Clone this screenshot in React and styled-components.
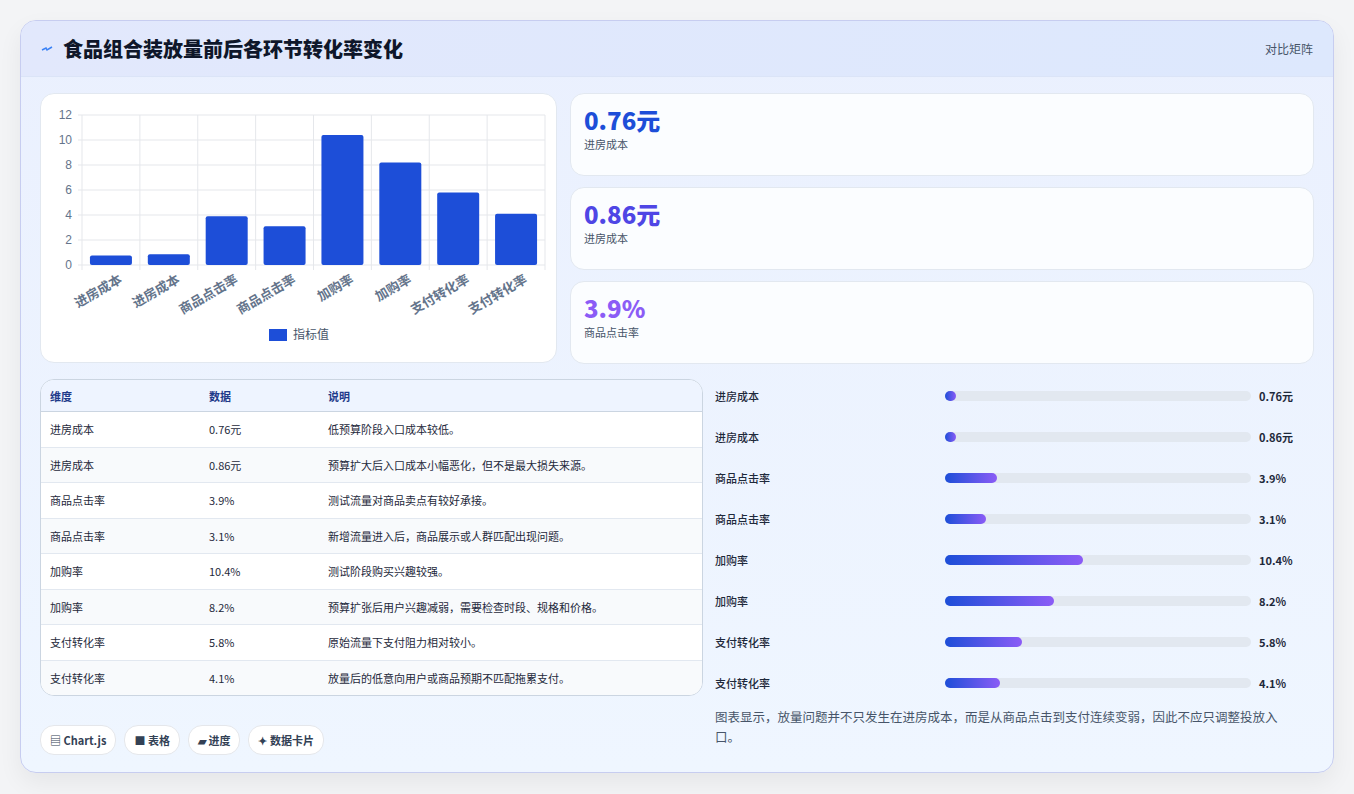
import React from "react";
import styled, { createGlobalStyle } from "styled-components";

const Global = createGlobalStyle`
  body { margin: 0; background: #f3f4f6; font-family: "Noto Sans CJK SC", "Noto Sans", sans-serif; }
`;

const data = [
  { name: "进房成本", value: 0.76, label: "0.76元", note: "低预算阶段入口成本较低。" },
  { name: "进房成本", value: 0.86, label: "0.86元", note: "预算扩大后入口成本小幅恶化，但不是最大损失来源。" },
  { name: "商品点击率", value: 3.9, label: "3.9%", note: "测试流量对商品卖点有较好承接。" },
  { name: "商品点击率", value: 3.1, label: "3.1%", note: "新增流量进入后，商品展示或人群匹配出现问题。" },
  { name: "加购率", value: 10.4, label: "10.4%", note: "测试阶段购买兴趣较强。" },
  { name: "加购率", value: 8.2, label: "8.2%", note: "预算扩张后用户兴趣减弱，需要检查时段、规格和价格。" },
  { name: "支付转化率", value: 5.8, label: "5.8%", note: "原始流量下支付阻力相对较小。" },
  { name: "支付转化率", value: 4.1, label: "4.1%", note: "放量后的低意向用户或商品预期不匹配拖累支付。" },
];

const Page = styled.div`
  padding: 20px;
  height: 794px;
  box-sizing: border-box;
`;
const Shell = styled.div`
  border: 1px solid #c7cdf0;
  border-radius: 16px;
  background: linear-gradient(180deg, #eaf0fe 0%, #eff6ff 100%);
  box-shadow: 0 10px 24px rgba(0,0,0,0.06);
  overflow: hidden;
  height: 753px;
  box-sizing: border-box;
`;
const Header = styled.div`
  height: 55px;
  display: flex;
  align-items: center;
  padding: 0 20px;
  background: linear-gradient(90deg, #e2e8fc, #dde8fd);
  border-bottom: 1px solid #dbe4f7;
`;
const Title = styled.h1`
  margin: 0;
  font-size: 20px;
  font-weight: 800;
  color: #0f172a;
  display: flex;
  align-items: center;
  gap: 10px;
`;
const Tag = styled.span`
  margin-left: auto;
  font-size: 12px;
  color: #475569;
`;
const Body = styled.div`
  padding: 16px 19px 0;
  display: grid;
  grid-template-columns: 663px 1fr;
  column-gap: 12px;
`;
const TopRow = styled.div`
  grid-column: 1 / 3;
  display: grid;
  grid-template-columns: 517px 1fr;
  gap: 13px;
  margin-bottom: 15px;
`;
const Card = styled.div`
  background: #fff;
  border: 1px solid #e2e8f0;
  border-radius: 14px;
`;
const ChartCard = styled(Card)`
  height: 270px;
  box-sizing: border-box;
`;
const Stats = styled.div`
  display: flex;
  flex-direction: column;
  gap: 11px;
`;
const Stat = styled(Card)`
  height: 83px;
  box-sizing: border-box;
  padding: 10px 13px;
  background: #fbfdff;
`;
const StatValue = styled.div`
  font-size: 24px;
  font-weight: 800;
  color: ${p => p.color};
  line-height: 32px;
`;
const StatLabel = styled.div`
  font-size: 11px;
  color: #475569;
`;
const Table = styled.table`
  width: 100%;
  border-collapse: collapse;
  font-size: 11px;
  color: #1e293b;
`;
const TableWrap = styled(Card)`
  overflow: hidden;
  border-color: #cbd5e1;
`;
const Th = styled.th`
  text-align: left;
  font-weight: 700;
  color: #1e3a8a;
  background: #eef4ff;
  height: 31px;
  padding: 0 9px;
  border-bottom: 1px solid #cbd5e1;
  width: ${p => p.w || "auto"};
`;
const Td = styled.td`
  height: 34.5px;
  padding: 0 9px;
  border-bottom: 1px solid #e2e8f0;
`;
const Tr = styled.tr`
  background: ${p => (p.odd ? "#f8fafc" : "#fff")};
  &:last-child td { border-bottom: none; }
`;
const Bars = styled.div`
  display: flex;
  flex-direction: column;
  margin-top: -4px;
`;
const BarRow = styled.div`
  display: grid;
  grid-template-columns: 222px 306px 1fr;
  align-items: center;
  column-gap: 8px;
  height: 41px;
  font-size: 11px;
  font-weight: 500;
  color: #1e293b;
`;
const Track = styled.div`
  height: 10px;
  border-radius: 5px;
  background: #e2e8f0;
`;
const Fill = styled.div`
  height: 100%;
  min-width: 11px;
  border-radius: 5px;
  background: linear-gradient(90deg, #1d4ed8, #8b5cf6);
`;
const BarValue = styled.span`
  font-weight: 700;
`;
const Chips = styled.div`
  display: flex;
  gap: 8px;
  margin-top: 29px;
`;
const Chip = styled.span`
  height: 28px;
  padding: 0 9px;
  border-radius: 14px;
  background: #fff;
  border: 1px solid #e5e7eb;
  display: flex;
  align-items: center;
  gap: 4px;
  font-size: 11px;
  font-weight: 700;
  color: #334155;
`;
const Note = styled.p`
  margin: 4px 20px 0 0;
  font-size: 12.5px;
  line-height: 20px;
  color: #475569;
`;

function BarChart() {
  const x0 = 41, x1 = 504, y0 = 21, y1 = 171;
  const slot = (x1 - x0) / 8;
  const ys = v => y1 - (v / 12) * (y1 - y0);
  return (
    <svg width="515" height="268" style={{ display: "block" }}>
      {[0, 2, 4, 6, 8, 10, 12].map(t => (
        <g key={t}>
          <line x1={x0 - 4} x2={x1} y1={ys(t)} y2={ys(t)} stroke="#e5e7eb" />
          <text x={x0 - 10} y={ys(t) + 4} fontSize="12" fill="#64748b" textAnchor="end" fontFamily="Liberation Sans, sans-serif">{t}</text>
        </g>
      ))}
      {Array.from({ length: 9 }).map((_, i) => (
        <line key={i} x1={x0 + i * slot} x2={x0 + i * slot} y1={y0} y2={y1 + 5} stroke="#e5e7eb" />
      ))}
      {data.map((d, i) => {
        const cx = x0 + slot * (i + 0.5);
        return (
          <g key={i}>
            <rect x={cx - 21} y={ys(d.value)} width="42" height={y1 - ys(d.value)} rx="2" fill="#1d4ed8" />
            <text transform={`translate(${cx + 12},${y1 + 17}) rotate(-30)`} fontSize="13" fontWeight="700" fill="#64748b" textAnchor="end">{d.name}</text>
          </g>
        );
      })}
      <rect x="228" y="235" width="18" height="12" fill="#1d4ed8" />
      <text x="252" y="245" fontSize="12" fill="#475569">指标值</text>
    </svg>
  );
}

export default function App() {
  return (
    <Page>
      <Global />
      <Shell>
        <Header>
          <Title>
            <svg width="12" height="10" viewBox="0 0 12 10"><path d="M1 6 L5 4 L6 6 L11 3" stroke="#3b82f6" strokeWidth="1.5" fill="none" /></svg>
            食品组合装放量前后各环节转化率变化
          </Title>
          <Tag>对比矩阵</Tag>
        </Header>
        <Body>
          <TopRow>
            <ChartCard><BarChart /></ChartCard>
            <Stats>
              <Stat><StatValue color="#1d4ed8">0.76元</StatValue><StatLabel>进房成本</StatLabel></Stat>
              <Stat><StatValue color="#4f46e5">0.86元</StatValue><StatLabel>进房成本</StatLabel></Stat>
              <Stat><StatValue color="#8b5cf6">3.9%</StatValue><StatLabel>商品点击率</StatLabel></Stat>
            </Stats>
          </TopRow>
          <div>
            <TableWrap>
              <Table>
                <thead>
                  <tr><Th w="141px">维度</Th><Th w="101px">数据</Th><Th>说明</Th></tr>
                </thead>
                <tbody>
                  {data.map((d, i) => (
                    <Tr key={i} odd={i % 2 === 1}>
                      <Td>{d.name}</Td><Td>{d.label}</Td><Td>{d.note}</Td>
                    </Tr>
                  ))}
                </tbody>
              </Table>
            </TableWrap>
            <Chips>
              <Chip>▤ Chart.js</Chip>
              <Chip>■ 表格</Chip>
              <Chip>▰ 进度</Chip>
              <Chip>✦ 数据卡片</Chip>
            </Chips>
          </div>
          <div>
            <Bars>
              {data.map((d, i) => (
                <BarRow key={i}>
                  <span>{d.name}</span>
                  <Track><Fill style={{ width: `${(d.value / 23) * 100}%` }} /></Track>
                  <BarValue>{d.label}</BarValue>
                </BarRow>
              ))}
            </Bars>
            <Note>图表显示，放量问题并不只发生在进房成本，而是从商品点击到支付连续变弱，因此不应只调整投放入口。</Note>
          </div>
        </Body>
      </Shell>
    </Page>
  );
}
